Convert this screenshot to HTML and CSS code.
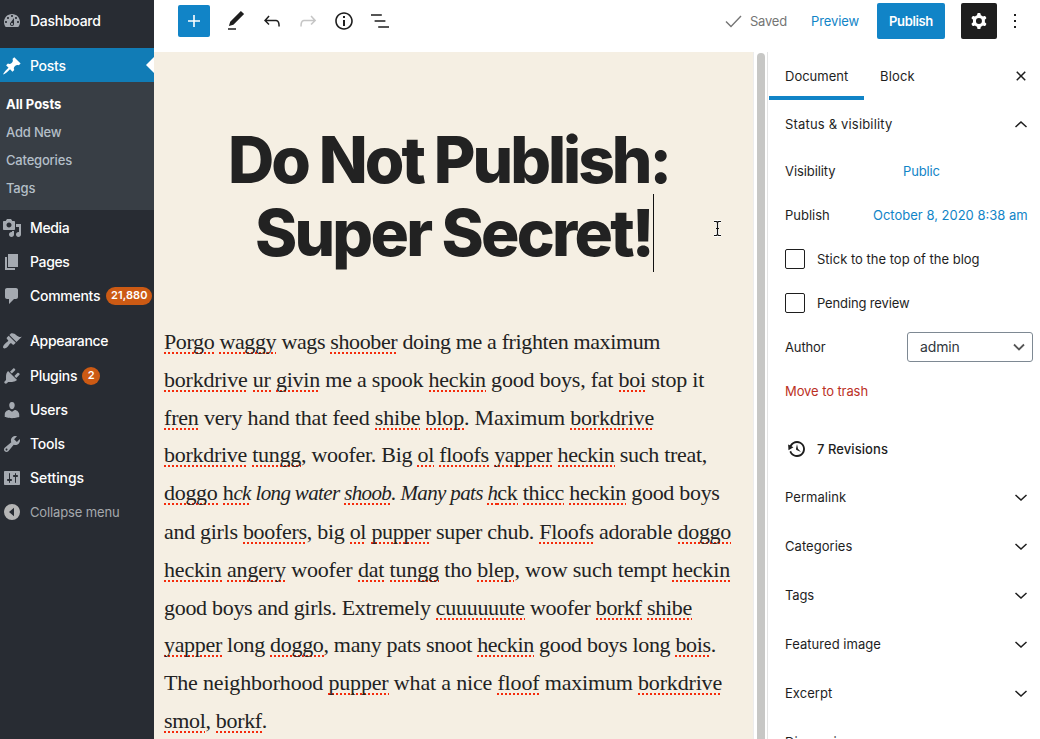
FILE: index.html
```html
<!DOCTYPE html>
<html lang="en">
<head>
<meta charset="utf-8">
<title>Edit Post</title>
<link rel="stylesheet" href="styles.css">
</head>
<body>
<div class="app">
  <nav class="menu">
    <a class="item first"><svg class="ic" viewBox="0 0 20 20"><path fill-rule="evenodd" d="M3.76 16h12.48c1.1-1.37 1.76-3.11 1.76-5 0-4.42-3.58-8-8-8s-8 3.58-8 8c0 1.89.66 3.63 1.76 5zM10 4c.55 0 1 .45 1 1s-.45 1-1 1-1-.45-1-1 .45-1 1-1zM6 6c.55 0 1 .45 1 1s-.45 1-1 1-1-.45-1-1 .45-1 1-1zm8 0c.55 0 1 .45 1 1s-.45 1-1 1-1-.45-1-1 .45-1 1-1zm-5.37 5.55L12 7v6c0 1.1-.9 2-2 2s-2-.9-2-2c0-.57.24-1.08.63-1.45zM4 10c.55 0 1 .45 1 1s-.45 1-1 1-1-.45-1-1 .45-1 1-1zm12 0c.55 0 1 .45 1 1s-.45 1-1 1-1-.45-1-1 .45-1 1-1zm-5 3c0-.55-.45-1-1-1s-1 .45-1 1 .45 1 1 1 1-.45 1-1z"/></svg><span>Dashboard</span></a>
    <a class="item current"><svg class="ic" viewBox="0 0 20 20"><path d="M10.44 3.02l1.82-1.82 6.36 6.35-1.83 1.82c-1.05-.68-2.48-.57-3.41.36l-.75.75c-.92.93-1.04 2.35-.35 3.41l-1.83 1.82-2.41-2.41-2.8 2.79c-.42.42-3.38 2.71-3.8 2.29s1.86-3.39 2.28-3.81l2.79-2.79L4.1 9.36l1.83-1.82c1.05.69 2.48.57 3.4-.36l.75-.75c.93-.92 1.05-2.35.36-3.41z"/></svg><span>Posts</span></a>
    <div class="sub">
      <a class="on">All Posts</a>
      <a>Add New</a>
      <a>Categories</a>
      <a>Tags</a>
    </div>
    <a class="item"><svg class="ic" viewBox="0 0 20 20"><path fill-rule="evenodd" d="M13 11V4c0-.55-.45-1-1-1h-1.67L9 1H5L3.67 3H2c-.55 0-1 .45-1 1v7c0 .55.45 1 1 1h10c.55 0 1-.45 1-1zM7 4.5c1.38 0 2.5 1.12 2.5 2.5S8.38 9.5 7 9.5 4.5 8.38 4.5 7 5.62 4.5 7 4.5zM14 6h5v10.5c0 1.38-1.12 2.5-2.5 2.5S14 17.88 14 16.5s1.12-2.5 2.5-2.5c.17 0 .34.02.5.05V9h-3V6zm-4 8.05V13h2v3.5c0 1.38-1.12 2.5-2.5 2.5S7 17.88 7 16.5 8.12 14 9.5 14c.17 0 .34.02.5.05z"/></svg><span class="tight">Media</span></a>
    <a class="item"><svg class="ic" viewBox="0 0 20 20"><path d="M6 15V2h10v13H6zm-1 1h8v2H3V5h2v11z"/></svg><span class="tight">Pages</span></a>
    <a class="item"><svg class="ic" viewBox="0 0 20 20"><path d="M5 2h9c1.1 0 2 .9 2 2v7c0 1.1-.9 2-2 2h-2l-5 5v-5H5c-1.1 0-2-.9-2-2V4c0-1.1.9-2 2-2z"/></svg><span>Comments</span><b class="badge">21,880</b></a>
    <a class="item gap"><svg class="ic" viewBox="0 0 20 20"><path d="M14.48 11.06L7.41 3.99l1.5-1.5c.5-.56 2.3-.47 3.51.32 1.21.8 1.43 1.28 2.91 2.1 1.18.64 2.45 1.26 4.45.85zm-.71.71L6.7 4.7 4.93 6.47c-.39.39-.39 1.02 0 1.41l1.06 1.06c.39.39.39 1.03 0 1.42-.6.6-1.43 1.11-2.21 1.69-.35.26-.7.53-1.01.84C1.43 14.23.4 16.08 1.4 17.07c.99 1 2.84-.03 4.18-1.36.31-.31.58-.66.85-1.02.57-.78 1.08-1.61 1.69-2.21.39-.39 1.02-.39 1.41 0l1.06 1.06c.39.39 1.02.39 1.41 0z"/></svg><span class="tight">Appearance</span></a>
    <a class="item"><svg class="ic" viewBox="0 0 20 20"><path d="M13.11 4.36L9.87 7.6 8 5.73l3.24-3.24c.35-.34 1.05-.2 1.56.32.52.51.66 1.21.31 1.55zm-8 1.77l.91-1.12 9.01 9.01-1.19.84c-.71.71-2.63 1.16-3.82 1.16H6.14L4.9 17.26c-.59.59-1.54.59-2.12 0-.59-.58-.59-1.53 0-2.12l1.24-1.24v-3.88c0-1.13.4-3.19 1.09-3.89zm7.26 3.97l3.24-3.24c.34-.35 1.04-.21 1.55.31.52.51.66 1.21.31 1.55l-3.24 3.25z"/></svg><span>Plugins</span><b class="badge round">2</b></a>
    <a class="item"><svg class="ic" viewBox="0 0 20 20"><path d="M10 9.25c-2.27 0-2.73-3.44-2.73-3.44C7 4.02 7.82 2 9.97 2c2.16 0 2.98 2.02 2.71 3.81 0 0-.41 3.44-2.68 3.44zm0 2.57L12.72 10c2.39 0 4.52 2.33 4.52 4.53v2.49s-3.65 1.13-7.24 1.13c-3.65 0-7.24-1.13-7.24-1.13v-2.49c0-2.25 1.94-4.48 4.47-4.48z"/></svg><span>Users</span></a>
    <a class="item"><svg class="ic" viewBox="0 0 20 20"><path fill-rule="evenodd" d="M16.68 9.77c-1.34 1.34-3.3 1.67-4.95.99l-5.41 6.52c-.99.99-2.59.99-3.58 0s-.99-2.59 0-3.57l6.52-5.42c-.68-1.65-.35-3.61.99-4.95 1.28-1.28 3.12-1.62 4.72-1.06l-2.89 2.89 2.82 2.82 2.86-2.87c.53 1.58.18 3.39-1.08 4.65zM3.81 16.21c.4.39 1.04.39 1.43 0 .4-.4.4-1.04 0-1.43-.39-.4-1.03-.4-1.43 0-.39.39-.39 1.03 0 1.43z"/></svg><span>Tools</span></a>
    <a class="item"><svg class="ic" viewBox="0 0 20 20"><path fill-rule="evenodd" d="M18 16V4c0-.55-.45-1-1-1H3c-.55 0-1 .45-1 1v12c0 .55.45 1 1 1h14c.55 0 1-.45 1-1zM8 11h1c.55 0 1 .45 1 1s-.45 1-1 1H8v1.5c0 .28-.22.5-.5.5s-.5-.22-.5-.5V13H6c-.55 0-1-.45-1-1s.45-1 1-1h1V5.5c0-.28.22-.5.5-.5s.5.22.5.5V11zm5-2h-1c-.55 0-1-.45-1-1s.45-1 1-1h1V5.5c0-.28.22-.5.5-.5s.5.22.5.5V7h1c.55 0 1 .45 1 1s-.45 1-1 1h-1v5.5c0 .28-.22.5-.5.5s-.5-.22-.5-.5V9z"/></svg><span class="wide">Settings</span></a>
    <a class="item collapse"><svg class="ic" viewBox="0 0 20 20"><path fill-rule="evenodd" d="M10 2a8 8 0 1 0 0 16 8 8 0 0 0 0-16zM12 5.800v8.400L7 10z"/></svg><span>Collapse menu</span></a>
  </nav>

  <div class="main">
    <header class="bar">
      <button class="add"><svg class="g" viewBox="0 0 24 24"><path d="M18 11.2h-5.2V6h-1.6v5.2H6v1.6h5.2V18h1.600v-5.200H18z"/></svg></button>
      <div class="tools">
        <svg class="g" viewBox="0 0 24 24"><path d="M20.1 5.1L16.900 2 6.200 12.700l-1.300 4.400 4.500-1.300L20.100 5.100zM4 20.800h8v-1.500H4v1.500z"/></svg>
        <svg class="g" viewBox="0 0 24 24"><path d="M18.300 11.700c-.6-.6-1.400-.9-2.300-.9H6.700l2.900-3.300-1.100-1-4.500 5L8.500 16l1-1-2.700-2.700H16c.5 0 .9.2 1.300.5 1 1 1 3.400 1 4.500v.3h1.500v-.2c0-1.500 0-4.300-1.500-5.700z"/></svg>
        <svg class="g off" viewBox="0 0 24 24"><path d="M15.600 6.500l-1.100 1 2.900 3.300H8c-.9 0-1.700.3-2.300.9-1.400 1.500-1.400 4.200-1.400 5.600v.2h1.500v-.3c0-1.100 0-3.500 1-4.500.3-.3.7-.5 1.300-.5h9.200L14.500 15l1.100 1.100 4.600-4.600-4.600-5z"/></svg>
        <svg class="g" viewBox="0 0 24 24"><path fill-rule="evenodd" d="M12 3.200c-4.800 0-8.800 3.900-8.800 8.800 0 4.800 3.900 8.800 8.800 8.800 4.800 0 8.800-3.900 8.800-8.800 0-4.800-4-8.800-8.800-8.800zm0 16c-4 0-7.200-3.300-7.200-7.200C4.800 8 8 4.800 12 4.800s7.200 3.300 7.200 7.200c0 4-3.200 7.200-7.200 7.200zM11 17h2v-6h-2v6zm0-8h2V7h-2v2z"/></svg>
        <svg class="g list" viewBox="0 0 24 24"><path d="M13.800 5.200H3v1.500h10.800V5.200zm-3.600 12v1.500H21v-1.500H10.200zm7.200-6H6.600v1.500h10.800v-1.500z"/></svg>
      </div>
      <div class="status"><svg class="g" viewBox="0 0 24 24"><path d="M9 18.600L3.500 13l1-1L9 16.400l9.500-9.900 1 1z"/></svg><span>Saved</span></div>
      <a class="preview">Preview</a>
      <button class="publish">Publish</button>
      <button class="cog"><svg class="g" viewBox="0 0 24 24"><path fill-rule="evenodd" d="M10.289 4.836A1 1 0 0111.275 4h1.306a1 1 0 01.987.836l.244 1.466c.787.26 1.503.679 2.108 1.218l1.393-.522a1 1 0 011.216.437l.653 1.130a1 1 0 01-.23 1.273l-1.148.944a6.025 6.025 0 010 2.435l1.149.946a1 1 0 01.23 1.272l-.653 1.130a1 1 0 01-1.216.437l-1.394-.522c-.605.54-1.320.958-2.108 1.218l-.244 1.466a1 1 0 01-.987.836h-1.306a1 1 0 01-.986-.836l-.244-1.466a5.995 5.995 0 01-2.108-1.218l-1.394.522a1 1 0 01-1.217-.436l-.653-1.131a1 1 0 01.23-1.272l1.149-.946a6.026 6.026 0 010-2.435l-1.148-.944a1 1 0 01-.23-1.272l.653-1.131a1 1 0 011.217-.437l1.393.522a5.994 5.994 0 012.108-1.218l.244-1.466zM14.929 12a3 3 0 11-6 0 3 3 0 016 0z"/></svg></button>
      <svg class="g more" viewBox="0 0 24 24"><path d="M13 19h-2v-2h2v2zm0-6h-2v-2h2v2zm0-6h-2V5h2v2z"/></svg>
    </header>

    <div class="work">
      <article class="canvas">
        <h1 class="title"><span class="tl one">Do Not Publish:</span><span class="tl two">Super Secret!<i class="caret"></i></span></h1>
        <p class="copy">
          <span class="ln"><u>Porgo</u> <u>waggy</u> wags <u>shoober</u> doing me a frighten maximum</span>
          <span class="ln"><u>borkdrive</u> <u>ur</u> <u>givin</u> me a spook <u>heckin</u> good boys, fat <u>boi</u> stop it</span>
          <span class="ln"><u>fren</u> very hand that feed <u>shibe</u> <u>blop</u>. Maximum <u>borkdrive</u></span>
          <span class="ln"><u>borkdrive</u> <u>tungg</u>, woofer. Big <u>ol</u> <u>floofs</u> <u>yapper</u> <u>heckin</u> such treat,</span>
          <span class="ln"><u>doggo</u> <u>h<em>ck</em></u><em> long water <u>shoob</u>. Many pats <u>h</u></em><u>ck</u> <u>thicc</u> <u>heckin</u> good boys</span>
          <span class="ln">and girls <u>boofers</u>, big <u>ol</u> <u>pupper</u> super chub. <u>Floofs</u> adorable <u>doggo</u></span>
          <span class="ln"><u>heckin</u> <u>angery</u> woofer <u>dat</u> <u>tungg</u> tho <u>blep</u>, wow such tempt <u>heckin</u></span>
          <span class="ln">good boys and girls. Extremely <u>cuuuuuute</u> woofer <u>borkf</u> <u>shibe</u></span>
          <span class="ln"><u>yapper</u> long <u>doggo</u>, many pats snoot <u>heckin</u> good boys long <u>bois</u>.</span>
          <span class="ln">The neighborhood <u>pupper</u> what a nice <u>floof</u> maximum <u>borkdrive</u></span>
          <span class="ln"><u>smol</u>, <u>borkf</u>.</span>
        </p>
        <svg class="ibeam" viewBox="0 0 11 17"><path d="M2 1.500h2.500l1 1 1-1H9M5.500 2v13M2 15.500h2.500l1-1 1 1H9M4 8.500h3" fill="none" stroke="#fff" stroke-width="3"/><path d="M2 1.500h2.500l1 1 1-1H9M5.500 2v13M2 15.500h2.500l1-1 1 1H9M4 8.500h3" fill="none" stroke="#111" stroke-width="1.200"/></svg>
      </article>
      <div class="scroll"><div class="thumb"></div></div>
      <aside class="side">
        <div class="tabs">
          <span class="tab sel">Document</span><span class="tab block">Block</span>
          <svg class="g close" viewBox="0 0 24 24"><path d="M12 13.060l3.712 3.713 1.061-1.060L13.061 12l3.712-3.712-1.060-1.060L12 10.938 8.288 7.227l-1.061 1.060L10.939 12l-3.712 3.712 1.060 1.061L12 13.061z"/></svg>
        </div>
        <div class="head open"><span>Status &amp; visibility</span><svg class="g" viewBox="0 0 24 24"><path d="M12 8l-6 5.400 1 1.200 5-4.600 5 4.600 1-1.200z"/></svg></div>
        <div class="row"><span class="lab vis">Visibility</span><a class="lnk cut">Public</a></div>
        <div class="row"><span class="lab pub">Publish</span><a class="lnk">October 8, 2020 8:38 am</a></div>
        <div class="row"><i class="box"></i><span>Stick to the top of the blog</span></div>
        <div class="row"><i class="box"></i><span class="cut">Pending review</span></div>
        <div class="row"><span class="lab aut cut">Author</span><span class="select cut"><span>admin</span><svg class="g" viewBox="0 0 24 24"><path d="M7 9.500l5 5 5-5" fill="none" stroke="#555" stroke-width="1.800"/></svg></span></div>
        <div class="row trash">Move to trash</div>
        <div class="revs"><svg viewBox="0 0 20 20"><path d="M13.650 2.880c3.930 2.010 5.480 6.840 3.470 10.770s-6.830 5.480-10.770 3.470c-1.870-.96-3.200-2.560-3.860-4.400l1.640-1.030c.45 1.570 1.520 2.950 3.080 3.760 3.010 1.540 6.690.35 8.230-2.660 1.550-3.010.36-6.690-2.650-8.240C9.780 3.010 6.100 4.200 4.560 7.210l1.880.97-4.950 3.080-.39-5.820 1.780.91C4.900 2.400 9.750.89 13.650 2.880zm-4.360 7.830C9.110 10.530 9 10.280 9 10c0-.07.03-.12.04-.19h-.01L10 5l.97 4.810L14 13l-4.500-2.120.02-.02c-.08-.04-.16-.09-.23-.15z"/></svg><span>7 Revisions</span></div>
        <div class="head p"><span>Permalink</span><svg class="g" viewBox="0 0 24 24"><path d="M17 9.400L12 14 7 9.400l-1 1.200 6 5.400 6-5.400z"/></svg></div>
        <div class="head p"><span>Categories</span><svg class="g" viewBox="0 0 24 24"><path d="M17 9.400L12 14 7 9.400l-1 1.200 6 5.400 6-5.400z"/></svg></div>
        <div class="head p"><span class="cut">Tags</span><svg class="g" viewBox="0 0 24 24"><path d="M17 9.400L12 14 7 9.400l-1 1.200 6 5.400 6-5.400z"/></svg></div>
        <div class="head p"><span>Featured image</span><svg class="g" viewBox="0 0 24 24"><path d="M17 9.400L12 14 7 9.400l-1 1.200 6 5.400 6-5.400z"/></svg></div>
        <div class="head p"><span>Excerpt</span><svg class="g" viewBox="0 0 24 24"><path d="M17 9.400L12 14 7 9.400l-1 1.200 6 5.400 6-5.400z"/></svg></div>
        <div class="head p"><span>Discussion</span><svg class="g" viewBox="0 0 24 24"><path d="M17 9.400L12 14 7 9.400l-1 1.200 6 5.400 6-5.400z"/></svg></div>
      </aside>
    </div>
  </div>
</div>
</body>
</html>
```
FILE: styles.css
```css
* { box-sizing: border-box; }
body { margin: 0; overflow: hidden; background: #fff; color: #1e1e1e; font: 400 13px/1.4 Inter, "Liberation Sans", sans-serif; }
button { border: 0; padding: 0; font: inherit; }
.app { display: flex; width: 1040px; height: 739px; overflow: hidden; }

/* Admin menu */
.menu { flex: none; width: 154px; background: #282c33; color: #fff; }
.item { position: relative; display: flex; align-items: center; height: 34px; padding-left: 2px; font-size: 14px; font-weight: 500; letter-spacing: -.27px; white-space: nowrap; }
.item .tight { letter-spacing: -.35px; }
.item .wide { letter-spacing: -.07px; }
.item.first { height: 48px; padding-bottom: 7px; }
.item .ic { width: 20px; height: 20px; margin-right: 8px; fill: #a5aab1; }
.item.current { padding-top: 1px; background: #117cb6; }
.item.current .ic { fill: #fff; }
.item.current::after { content: ""; position: absolute; right: 0; top: 9px; border: 8px solid transparent; border-left: 0; border-right-color: #fff; }
.sub { height: 128px; margin-bottom: 1px; padding: 8px 6px; background: #383e45; }
.sub a { display: block; height: 28px; line-height: 28px; font-size: 13px; font-weight: 500; letter-spacing: -.19px; color: #b4bfc8; }
.sub a.on { color: #fff; font-weight: 700; letter-spacing: 0; }
.item.gap { margin: 11px 0 1px; }
.item.collapse { color: #a5a9ad; font-size: 13px; font-weight: 400; letter-spacing: -.137px; }
.item.collapse .ic { fill: #b5b5b5; }
.badge { display: flex; align-items: center; justify-content: center; width: 46px; height: 18px; margin-left: 6px; border-radius: 9px; background: #cc5a14; font-size: 11px; font-weight: 600; letter-spacing: .07px; }
.badge.round { width: 18px; margin-left: 5px; }

/* Top toolbar */
.main { flex: 1; display: flex; flex-direction: column; min-width: 0; }
.bar { flex: none; display: flex; align-items: center; height: 52px; padding: 0 13px 10px 24px; }
.g { display: block; flex: none; width: 24px; height: 24px; fill: #1e1e1e; }
.add { display: flex; align-items: center; justify-content: center; width: 32px; height: 32px; border-radius: 2px; background: #1184c7; }
.add .g { fill: #fff; }
.tools { display: flex; gap: 12px; margin-left: 14px; }
.off { opacity: .25; }
.status { display: flex; align-items: center; gap: 4px; margin-left: auto; color: #757575; letter-spacing: -.2px; }
.status .g { fill: #757575; }
.preview { margin-left: 24px; color: #1184c7; letter-spacing: -.107px; }
.publish { width: 68px; height: 36px; margin-left: 18px; border-radius: 2px; background: #1184c7; color: #fff; font-weight: 600; letter-spacing: -.339px; }
.cog { display: flex; align-items: center; justify-content: center; width: 36px; height: 36px; margin-left: 16px; border-radius: 2px; background: #1e1e1e; }
.cog .g { fill: #fff; }
.more { margin-left: 6px; }

/* Post canvas */
.work { flex: 1; display: flex; min-height: 0; }
.canvas { position: relative; flex: none; width: 600px; padding: 71px 10px 0; border-right: 1px solid #ececec; background: #f5efe3; overflow: hidden; }
.title { margin: 0 0 54px; text-align: center; font-size: 64px; line-height: 73px; font-weight: 800; color: #222; white-space: nowrap; }
.tl { display: table; margin: 0 auto; position: relative; }
.tl.one { padding-right: 10px; letter-spacing: -3.019px; }
.tl.two { letter-spacing: -2.740px; }
.caret { position: absolute; right: -2px; top: -2px; width: 1px; height: 78px; background: #111; }
.copy { margin: 0; font: 22px/37.800px "Liberation Serif", serif; color: #222; }
.ln { display: block; white-space: nowrap; }
.ln u { text-decoration: none; background: repeating-linear-gradient(90deg, #f42c0c 0 2px, transparent 2px 4px) 0 100% / 100% 2px no-repeat; }
.ln em { font-size: 21px; letter-spacing: -.63px; }
.ln:nth-child(1) { letter-spacing: -.371px; }
.ln:nth-child(2) { letter-spacing: -.226px; }
.ln:nth-child(3) { letter-spacing: -.193px; }
.ln:nth-child(4) { letter-spacing: -.280px; }
.ln:nth-child(5) { letter-spacing: -.300px; }
.ln:nth-child(6) { letter-spacing: -.297px; }
.ln:nth-child(7) { letter-spacing: -.165px; }
.ln:nth-child(8) { letter-spacing: -.299px; }
.ln:nth-child(9) { letter-spacing: -.323px; }
.ln:nth-child(10) { letter-spacing: -.173px; }
.ln:nth-child(11) { letter-spacing: -.329px; }
.ibeam { position: absolute; left: 558px; top: 168px; width: 11px; height: 17px; }
.scroll { flex: none; width: 14px; padding: 1px 2px 0 3px; border-right: 1px solid #e4e4e4; }
.thumb { height: 720px; width: 8px; border-radius: 4px; background: #c7c7c5; }

/* Document settings */
.side { flex: 1; padding-left: 1px; overflow: hidden; }
.tabs { display: flex; height: 48px; }
.tab { padding: 0 16px; line-height: 48px; }
.tab.sel { width: 95px; border-bottom: 4px solid #1184c7; }
.tab.block { letter-spacing: .15px; }
.close { margin: 12px 7px 0 auto; }
.head { display: flex; align-items: center; justify-content: space-between; height: 49px; padding: 0 7px 0 16px; letter-spacing: .04px; }
.head.open { letter-spacing: .177px; }
.head.p .g { margin-top: -2px; }
.row { display: flex; align-items: center; height: 44px; padding-left: 16px; white-space: nowrap; }
.row .cut, .head .cut { letter-spacing: -.135px; }
.lab.vis { width: 118px; letter-spacing: -.086px; }
.lab.pub { width: 88px; }
.lab.aut { width: 122px; }
.lnk { color: #1184c7; }
.box { width: 20px; height: 20px; margin-right: 12px; border: 1px solid #1e1e1e; border-radius: 2px; }
.select { display: flex; align-items: center; justify-content: space-between; width: 126px; height: 30px; padding: 0 1px 0 12px; border: 1px solid #7e8993; border-radius: 3px; font-size: 14px; color: #32373c; }
.trash { color: #bb3024; letter-spacing: -.089px; }
.revs { display: flex; align-items: center; height: 48px; margin-top: 12px; padding-left: 18px; font-weight: 500; letter-spacing: .07px; }
.revs svg { width: 20px; height: 20px; margin-right: 10px; fill: #1e1e1e; }
```
